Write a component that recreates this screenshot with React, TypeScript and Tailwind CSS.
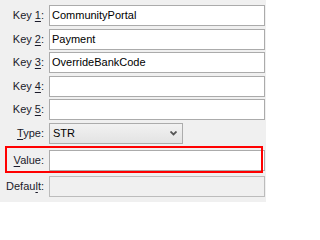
import React from "react";

const font = { fontFamily: '"Liberation Sans", Arial, sans-serif' };

const Label = ({ pre, key1, post }: { pre: string; key1: string; post: string }) => (
  <div className="w-[49px] shrink-0 pr-[5px] text-right text-[11px] leading-none text-[#1a1a2a]">
    {pre}
    <span className="underline underline-offset-[1.5px]">{key1}</span>
    {post}
  </div>
);

const TextBox = ({ value, disabled }: { value?: string; disabled?: boolean }) => (
  <div
    className={`flex h-[21px] flex-1 items-center border px-[2px] text-[11px] text-black ${
      disabled ? "border-[#bcbcbc] bg-[#f0f0f0]" : "border-[#ababab] bg-white"
    }`}
  >
    {value}
  </div>
);

export default function App() {
  const keys = ["CommunityPortal", "Payment", "OverrideBankCode", "", ""];

  return (
    <div className="h-[202px] w-[266px] bg-[#f0f0f0] pt-[5px] pr-px" style={font}>
      <div className="flex flex-col gap-[2.5px]">
        {keys.map((k, i) => (
          <div key={i} className="flex items-center">
            <Label pre="Key " key1={String(i + 1)} post=":" />
            <TextBox value={k} />
          </div>
        ))}
      </div>

      {/* Type */}
      <div className="mt-[3px] flex items-center">
        <Label pre="" key1="T" post="ype:" />
        <div className="flex h-[21px] w-[134px] items-center justify-between border border-[#acacac] bg-gradient-to-b from-[#f2f2f2] to-[#e3e3e3] pl-[3px] pr-[5px] text-[11px] text-black">
          <span>STR</span>
          <svg width="7" height="5" viewBox="0 0 7 5">
            <path d="M0.5 0.5 L3.5 3.5 L6.5 0.5" stroke="#555" strokeWidth="1.8" fill="none" />
          </svg>
        </div>
      </div>

      {/* Value */}
      <div className="relative mt-[6px] flex items-center">
        <Label pre="" key1="V" post="alue:" />
        <TextBox />
        <div className="pointer-events-none absolute top-[-4px] left-[5px] h-[27px] w-[258px] border-[2.5px] border-[#ff0000]" />
      </div>

      {/* Default */}
      <div className="mt-[5px] flex items-center">
        <Label pre="Defau" key1="l" post="t:" />
        <TextBox disabled />
      </div>
    </div>
  );
}
